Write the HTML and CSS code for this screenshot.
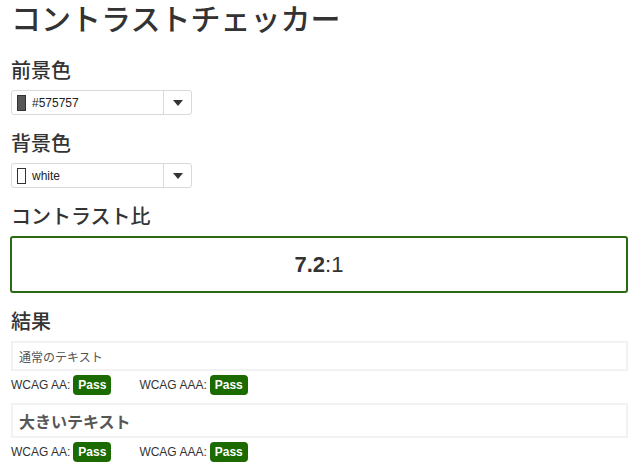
FILE: index.html
```html
<!DOCTYPE html>
<html lang="ja">
<head>
<meta charset="utf-8">
<link rel="stylesheet" href="styles.css">
</head>
<body>
<h1 class="title">コントラストチェッカー</h1>

<h2 class="label">前景色</h2>
<div class="picker">
  <div class="picker-value"><span class="swatch swatch-fg"></span><span>#575757</span></div>
  <div class="picker-btn"><span class="caret"></span></div>
</div>

<h2 class="label">背景色</h2>
<div class="picker">
  <div class="picker-value"><span class="swatch swatch-bg"></span><span>white</span></div>
  <div class="picker-btn"><span class="caret"></span></div>
</div>

<h2 class="label">コントラスト比</h2>
<div class="ratio"><b>7.2</b>:1</div>

<h2 class="label">結果</h2>
<div class="sample sample-normal">通常のテキスト</div>
<div class="checks">
  <span class="check">WCAG AA: <span class="badge">Pass</span></span>
  <span class="check">WCAG AAA: <span class="badge">Pass</span></span>
</div>
<div class="sample sample-large">大きいテキスト</div>
<div class="checks">
  <span class="check">WCAG AA: <span class="badge">Pass</span></span>
  <span class="check">WCAG AAA: <span class="badge">Pass</span></span>
</div>
</body>
</html>
```

FILE: styles.css
```css
html, body {
  margin: 0;
  background: #fff;
}
body {
  padding: 0 12px 0 11px;
  font-family: "Liberation Sans", "Noto Sans CJK JP", sans-serif;
  color: #333;
}
.title {
  margin: 0 0 24px;
  font-family: "Noto Sans CJK JP", sans-serif;
  font-weight: 500;
  font-size: 30px;
  line-height: 34px;
  color: #333;
}
.label {
  margin: 16px 0 8px;
  font-family: "Noto Sans CJK JP", sans-serif;
  font-weight: 500;
  font-size: 20px;
  line-height: 24px;
  color: #333;
}
.picker {
  display: flex;
  width: 181px;
  height: 25px;
  box-sizing: border-box;
  border: 1px solid #d9d9d9;
  border-radius: 3px;
  background: #fff;
}
.picker-value {
  flex: 1;
  display: flex;
  align-items: center;
  gap: 6px;
  padding-left: 5px;
  font-size: 12px;
  color: #222;
  border-right: 1px solid #d9d9d9;
}
.swatch {
  width: 7px;
  height: 14px;
  border: 1px solid #333;
}
.swatch-fg { background: #575757; }
.swatch-bg { background: #fff; }
.picker-btn {
  width: 27px;
  display: flex;
  align-items: center;
  justify-content: center;
}
.caret {
  width: 0;
  height: 0;
  border-left: 5px solid transparent;
  border-right: 5px solid transparent;
  border-top: 6px solid #333;
}
.ratio {
  height: 57px;
  box-sizing: border-box;
  border: 2px solid #2a6a12;
  border-radius: 3px;
  display: flex;
  align-items: center;
  justify-content: center;
  font-size: 22px;
  color: #333;
  margin-left: -1px;
}
.ratio b { font-weight: 700; }
.sample {
  box-sizing: border-box;
  border: 2px solid #f2f2f2;
  padding: 0 6px;
  display: flex;
  align-items: center;
  font-family: "Noto Sans CJK JP", sans-serif;
}
.sample-normal {
  height: 30px;
  font-size: 12px;
  color: #555;
}
.sample-large {
  height: 35px;
  font-size: 16px;
  font-weight: 700;
  color: #575757;
}
.checks {
  display: flex;
  gap: 28px;
  align-items: center;
  padding: 4px 0 8px;
  font-size: 12px;
  color: #333;
}
.check {
  display: flex;
  align-items: center;
  gap: 3px;
}
.badge {
  display: inline-block;
  background: #1c6b00;
  color: #fff;
  font-weight: 700;
  font-size: 12px;
  line-height: 20px;
  padding: 0 5px;
  border-radius: 4px;
}
```
